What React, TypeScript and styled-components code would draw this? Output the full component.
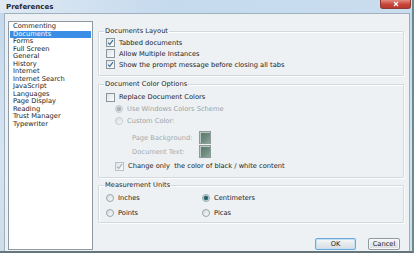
import React from "react";
import styled, { createGlobalStyle } from "styled-components";

const Global = createGlobalStyle`
  html, body { margin: 0; padding: 0; background: #ffffff; }
  body { font-family: "DejaVu Sans", "Liberation Sans", sans-serif; }
  * { box-sizing: border-box; }
`;

const Window = styled.div`
  width: 414px;
  height: 253px;
  display: flex;
  flex-direction: column;
  background: linear-gradient(180deg, #c3d8ec 0%, #d6e4f1 60%, #cfdde9 100%);
  border-right: 2px solid #6a8a90;
  border-bottom: 2px solid #66757c;
  overflow: hidden;
`;

const TitleBar = styled.div`
  height: 13px;
  flex: none;
  display: flex;
  align-items: center;
  justify-content: space-between;
  padding-left: 6px;
  padding-right: 1px;
  background: linear-gradient(90deg, #dfe9f3 0%, #c6daee 40%, #c9ddef 100%);
`;

const Title = styled.span`
  font-size: 7px;
  font-weight: bold;
  color: #1d2433;
`;

const CloseButton = styled.div`
  align-self: flex-start;
  width: 31px;
  height: 9px;
  border-radius: 0 0 3px 3px;
  background: linear-gradient(180deg, #e08a7c 0%, #c8453a 55%, #b8382e 100%);
  border: 1px solid #8c3a32;
  border-top: none;
  display: flex;
  align-items: center;
  justify-content: center;
`;

const Client = styled.div`
  flex: 1;
  margin: 0 2px 2px 4px;
  background: #eef1f3;
  border: 1px solid #9fb1be;
  display: flex;
  padding: 7px 5px 1px 3px;
  gap: 5px;
`;

const List = styled.ul`
  width: 85px;
  flex: none;
  margin: 0;
  padding: 1px 1px;
  list-style: none;
  background: #ffffff;
  border: 1px solid #8d9aa4;
`;

const ListItem = styled.li<{ $selected?: boolean }>`
  height: 7.5px;
  line-height: 7.5px;
  font-size: 6.7px;
  padding-left: 3px;
  color: ${(p) => (p.$selected ? "#ffffff" : "#1b1b1b")};
  background: ${(p) => (p.$selected ? "#3a8ee6" : "transparent")};
  white-space: nowrap;
`;

const Right = styled.div`
  flex: 1;
  display: flex;
  flex-direction: column;
  padding-top: 6px;
`;

const Group = styled.fieldset<{ $pt: number; $pb: number; $mt: number }>`
  margin: ${(p) => p.$mt}px 0 0 0;
  padding: ${(p) => p.$pt}px 6px ${(p) => p.$pb}px 7px;
  border: 1px solid #d3d9dd;
  box-shadow: inset 1px 1px 0 #ffffff, 1px 1px 0 #fbfcfc;
  border-radius: 1px;
  display: flex;
  flex-direction: column;
  min-width: 0;
`;

const Legend = styled.legend`
  font-size: 6.7px;
  line-height: 8px;
  height: 8px;
  color: #1e1e1e;
  padding: 0 1px;
  margin-left: -2px;
`;

const Row = styled.div<{ $h: number; $indent?: number; $mt?: number }>`
  height: ${(p) => p.$h}px;
  margin-top: ${(p) => p.$mt ?? 0}px;
  padding-left: ${(p) => p.$indent ?? 0}px;
  display: flex;
  align-items: center;
  gap: 4px;
  font-size: 6.7px;
  white-space: nowrap;
`;

const Label = styled.span<{ $disabled?: boolean }>`
  color: ${(p) => (p.$disabled ? "#9aa3a8" : "#1c1c1c")};
`;

const Box = styled.span<{ $disabled?: boolean }>`
  width: 9px;
  height: 9px;
  flex: none;
  display: flex;
  align-items: center;
  justify-content: center;
  border: 1px solid ${(p) => (p.$disabled ? "#b9c1c5" : "#8a959c")};
  background: linear-gradient(135deg, #dfe4e7 0%, #fbfcfc 100%);
`;

const Radio = styled.span<{ $disabled?: boolean }>`
  width: 8px;
  height: 8px;
  flex: none;
  border-radius: 50%;
  display: flex;
  align-items: center;
  justify-content: center;
  border: 1px solid ${(p) => (p.$disabled ? "#c3cace" : "#9aa5ab")};
  background: linear-gradient(135deg, #d7dde0 0%, #f7f9f9 100%);
`;

const Dot = styled.span<{ $disabled?: boolean }>`
  width: 4px;
  height: 4px;
  border-radius: 50%;
  background: ${(p) => (p.$disabled ? "#aab3b8" : "#2f5f66")};
  box-shadow: 0 0 0 0.5px ${(p) => (p.$disabled ? "#c5ccd0" : "#5fa3b0")};
`;

const SwatchLabel = styled.span`
  width: 63px;
  color: #a2aaae;
`;

const Swatch = styled.span`
  width: 12px;
  height: 13px;
  flex: none;
  border: 1px solid #8e9a96;
  background: linear-gradient(135deg, #587568 0%, #6c8a7d 55%, #8ea79c 100%);
  box-shadow: inset 1px 1px 0 #b9c9c2;
`;

const UnitsGrid = styled.div`
  display: grid;
  grid-template-columns: 96px 1fr;
`;

const ButtonRow = styled.div`
  margin-top: 15px;
  display: flex;
  justify-content: flex-end;
  gap: 12px;
  padding-right: 4px;
`;

const Button = styled.button<{ $default?: boolean }>`
  height: 12px;
  width: ${(p) => (p.$default ? 41 : 32)}px;
  padding: 0;
  font-family: inherit;
  font-size: 6.7px;
  line-height: 10px;
  color: #1c1c1c;
  border-radius: 2px;
  border: 1px solid ${(p) => (p.$default ? "#6fa8d8" : "#8f9a9f")};
  background: linear-gradient(180deg, #f6f7f8 0%, #e6e9eb 50%, #d9dde0 100%);
  box-shadow: ${(p) => (p.$default ? "inset 0 0 0 1px #bfe0f5" : "inset 0 0 0 1px #f7f8f9")};
`;

const Check = ({ disabled }: { disabled?: boolean }) => (
  <svg width="7" height="7" viewBox="0 0 7 7">
    <path
      d="M1 3.6 L2.8 5.4 L6 1.2"
      fill="none"
      stroke={disabled ? "#9fb0b8" : "#3b6d96"}
      strokeWidth="1.1"
    />
  </svg>
);

const CheckBox = ({ checked, disabled }: { checked?: boolean; disabled?: boolean }) => (
  <Box $disabled={disabled}>{checked && <Check disabled={disabled} />}</Box>
);

const RadioButton = ({ selected, disabled }: { selected?: boolean; disabled?: boolean }) => (
  <Radio $disabled={disabled}>{selected && <Dot $disabled={disabled} />}</Radio>
);

const categories = [
  "Commenting",
  "Documents",
  "Forms",
  "Full Screen",
  "General",
  "History",
  "Internet",
  "Internet Search",
  "JavaScript",
  "Languages",
  "Page Display",
  "Reading",
  "Trust Manager",
  "Typewriter",
];

export default function App() {
  return (
    <>
      <Global />
      <Window>
        <TitleBar>
          <Title>Preferences</Title>
          <CloseButton>
            <svg width="6" height="6" viewBox="0 0 6 6">
              <path d="M1 1 L5 5 M5 1 L1 5" stroke="#ffffff" strokeWidth="1.3" />
            </svg>
          </CloseButton>
        </TitleBar>
        <Client>
          <List>
            {categories.map((c) => (
              <ListItem key={c} $selected={c === "Documents"}>
                {c}
              </ListItem>
            ))}
          </List>
          <Right>
            <Group $mt={0} $pt={2} $pb={5}>
              <Legend>Documents Layout</Legend>
              <Row $h={11}>
                <CheckBox checked />
                <Label>Tabbed documents</Label>
              </Row>
              <Row $h={11}>
                <CheckBox />
                <Label>Allow Multiple Instances</Label>
              </Row>
              <Row $h={11}>
                <CheckBox checked />
                <Label>Show the prompt message before closing all tabs</Label>
              </Row>
            </Group>

            <Group $mt={4} $pt={3} $pb={5}>
              <Legend>Document Color Options</Legend>
              <Row $h={12}>
                <CheckBox />
                <Label>Replace Document Colors</Label>
              </Row>
              <Row $h={12} $indent={9}>
                <RadioButton selected disabled />
                <Label $disabled>Use Windows Colors Scheme</Label>
              </Row>
              <Row $h={12} $indent={9}>
                <RadioButton disabled />
                <Label $disabled>Custom Color:</Label>
              </Row>
              <Row $h={13} $mt={4} $indent={26}>
                <SwatchLabel>Page Background:</SwatchLabel>
                <Swatch />
              </Row>
              <Row $h={13} $mt={1} $indent={26}>
                <SwatchLabel>Document Text:</SwatchLabel>
                <Swatch />
              </Row>
              <Row $h={12} $mt={2} $indent={9}>
                <CheckBox checked disabled />
                <Label>Change only&nbsp; the color of black / white content</Label>
              </Row>
            </Group>

            <Group $mt={3} $pt={1} $pb={2}>
              <Legend>Measurement Units</Legend>
              <UnitsGrid>
                <Row $h={15}>
                  <RadioButton />
                  <Label>Inches</Label>
                </Row>
                <Row $h={15}>
                  <RadioButton selected />
                  <Label>Centimeters</Label>
                </Row>
                <Row $h={15}>
                  <RadioButton />
                  <Label>Points</Label>
                </Row>
                <Row $h={15}>
                  <RadioButton />
                  <Label>Picas</Label>
                </Row>
              </UnitsGrid>
            </Group>

            <ButtonRow>
              <Button $default>OK</Button>
              <Button>Cancel</Button>
            </ButtonRow>
          </Right>
        </Client>
      </Window>
    </>
  );
}
